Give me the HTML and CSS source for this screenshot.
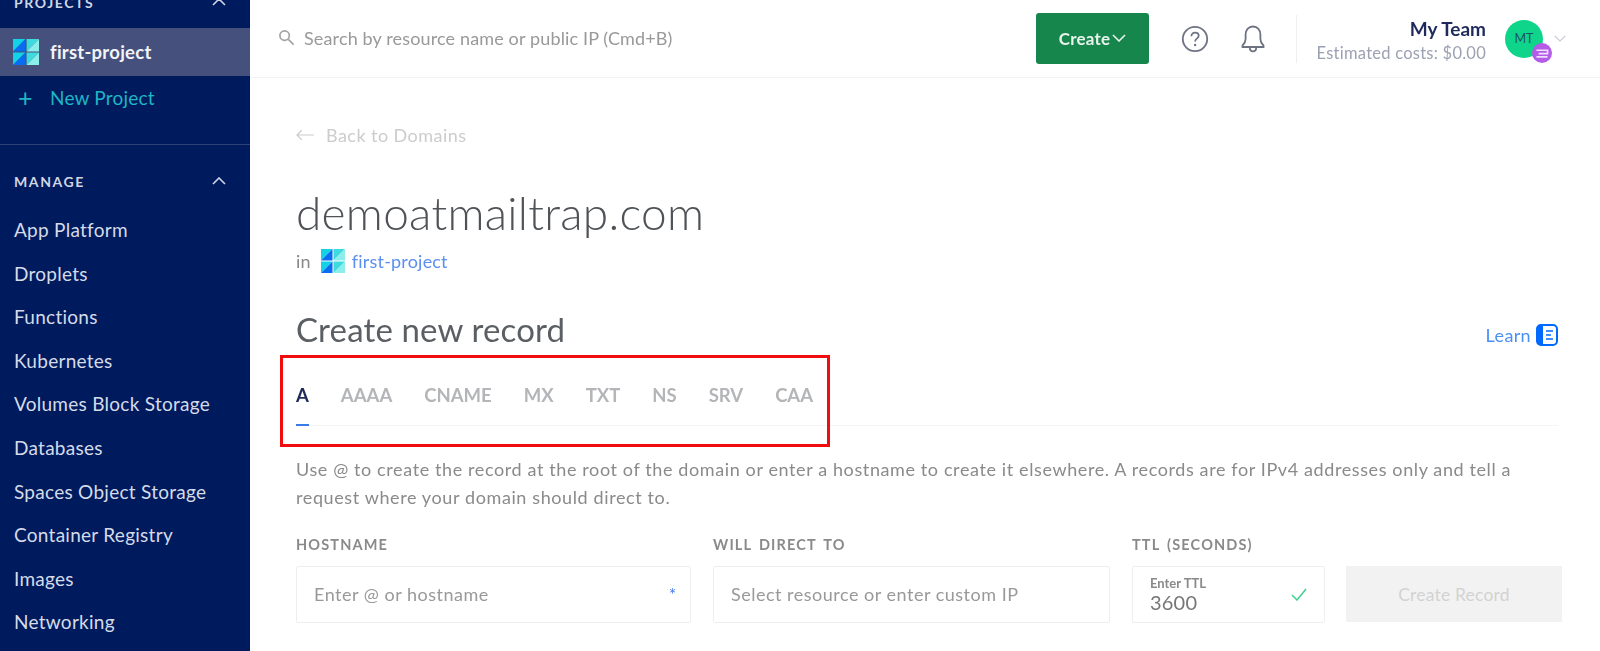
FILE: index.html
```html
<!DOCTYPE html>
<html lang="en">
<head>
<meta charset="utf-8">
<title>demoatmailtrap.com</title>
<link rel="stylesheet" href="styles.css">
</head>
<body>
<div class="app">
  <aside class="sidebar">
    <div class="side-head side-head-projects">
      <span>PROJECTS</span>
      <svg class="caret" viewBox="0 0 14 8"><path d="M1 7l6-6 6 6"/></svg>
    </div>
    <a class="project-row">
      <svg class="logo" viewBox="0 0 24 24"><path d="M0 0h11.500L0 11.500z" fill="#12d3e6"/><path d="M11.500 0v11.500H0z" fill="#0a6cf0"/><path d="M0 12.500h11.500L0 24z" fill="#12d3e6"/><path d="M11.500 12.500V24H0z" fill="#0a6cf0"/><path d="M12.500 0H24L12.500 11.500z" fill="#3ddbe0"/><path d="M24 0v11.500H12.500z" fill="#8ceeea"/><path d="M12.500 12.500H24L12.500 24z" fill="#3ddbe0"/><path d="M24 12.500V24H12.500z" fill="#8ceeea"/></svg>
      <span>first-project</span>
    </a>
    <a class="new-project"><span class="plus">+</span><span>New Project</span></a>
    <div class="side-rule"></div>
    <div class="side-head side-head-manage">
      <span>MANAGE</span>
      <svg class="caret" viewBox="0 0 14 8"><path d="M1 7l6-6 6 6"/></svg>
    </div>
    <nav class="side-nav">
      <a>App Platform</a>
      <a>Droplets</a>
      <a>Functions</a>
      <a>Kubernetes</a>
      <a>Volumes Block Storage</a>
      <a>Databases</a>
      <a>Spaces Object Storage</a>
      <a>Container Registry</a>
      <a>Images</a>
      <a>Networking</a>
    </nav>
  </aside>
  <div class="main">
    <header class="topbar">
      <div class="search">
        <svg class="search-icon" viewBox="0 0 18 18"><circle cx="7" cy="7" r="5"/><path d="M11 11l5.500 5.500"/></svg>
        <span>Search by resource name or public IP (Cmd+B)</span>
      </div>
      <button class="create-btn">Create<svg viewBox="0 0 14 8"><path d="M1 1l6 6 6-6"/></svg></button>
      <svg class="icon-help" viewBox="0 0 28 28"><circle cx="14" cy="14" r="12.200"/><path d="M10.400 11.200c0-2.200 1.600-3.600 3.700-3.600s3.600 1.300 3.600 3.200c0 2.800-3.600 2.900-3.600 5.600"/><circle class="dot" cx="14.100" cy="20" r="1.200"/></svg>
      <svg class="icon-bell" viewBox="0 0 28 30"><path d="M14 2.500c-4.600 0-7.400 3.400-7.400 8v4.500c0 3-1.100 4.500-3.100 6.500v1.500h21v-1.500c-2-2-3.100-3.500-3.100-6.500v-4.500c0-4.600-2.800-8-7.400-8z"/><path d="M10.800 23.500c0 2.500 1.400 3.800 3.200 3.800s3.200-1.300 3.200-3.800"/></svg>
      <div class="top-rule"></div>
      <div class="team">
        <strong>My Team</strong>
        <span>Estimated costs: $0.00</span>
      </div>
      <div class="avatar">MT
        <svg class="avatar-badge" viewBox="0 0 18 18"><circle cx="9" cy="9" r="9" fill="#b45be8"/><path d="M4 6.500h10v3H6M4 12.500h10" fill="none" stroke="#efe0ff" stroke-width="1.500"/></svg>
      </div>
      <svg class="avatar-caret" viewBox="0 0 14 8"><path d="M1 1l6 6 6-6"/></svg>
    </header>
    <main class="content">
      <a class="back"><svg viewBox="0 0 20 12"><path d="M6 1L1 6l5 5M1 6h18"/></svg>Back to Domains</a>
      <h1>demoatmailtrap.com</h1>
      <div class="in-project">
        <span>in</span>
        <svg class="logo" viewBox="0 0 24 24"><path d="M0 0h11.500L0 11.500z" fill="#12d3e6"/><path d="M11.500 0v11.500H0z" fill="#0a6cf0"/><path d="M0 12.500h11.500L0 24z" fill="#12d3e6"/><path d="M11.500 12.500V24H0z" fill="#0a6cf0"/><path d="M12.500 0H24L12.500 11.500z" fill="#3ddbe0"/><path d="M24 0v11.500H12.500z" fill="#8ceeea"/><path d="M12.500 12.500H24L12.500 24z" fill="#3ddbe0"/><path d="M24 12.500V24H12.500z" fill="#8ceeea"/></svg>
        <a>first-project</a>
      </div>
      <div class="record-head">
        <h2>Create new record</h2>
        <a class="learn">Learn<svg viewBox="0 0 22 22"><rect x="1" y="1" width="20" height="20" rx="4" fill="#fff" stroke="#0069ff" stroke-width="2"/><path d="M1 5a4 4 0 0 1 4-4h2v20H5a4 4 0 0 1-4-4z" fill="#0069ff"/><path d="M10 7h7M10 11h5M10 15h7" stroke="#0069ff" stroke-width="1.600"/></svg></a>
      </div>
      <div class="tabs">
        <a class="tab active">A</a>
        <a class="tab">AAAA</a>
        <a class="tab">CNAME</a>
        <a class="tab">MX</a>
        <a class="tab">TXT</a>
        <a class="tab">NS</a>
        <a class="tab">SRV</a>
        <a class="tab">CAA</a>
        <div class="highlight"></div>
      </div>
      <p class="desc">Use @ to create the record at the root of the domain or enter a hostname to create it elsewhere. A records are for IPv4 addresses only and tell a request where your domain should direct to.</p>
      <div class="form">
        <div class="field field-host">
          <label>HOSTNAME</label>
          <div class="input"><span>Enter @ or hostname</span><i class="req">*</i></div>
        </div>
        <div class="field field-dir">
          <label>WILL DIRECT TO</label>
          <div class="input"><span>Select resource or enter custom IP</span></div>
        </div>
        <div class="field field-ttl">
          <label>TTL (SECONDS)</label>
          <div class="input input-ttl">
            <div class="ttl-text"><small>Enter TTL</small><b>3600</b></div>
            <svg viewBox="0 0 16 13"><path d="M1 7l5 5 9-11"/></svg>
          </div>
        </div>
        <button class="submit">Create Record</button>
      </div>
    </main>
  </div>
</div>
</body>
</html>
```
FILE: styles.css
```css
* { box-sizing: border-box; }
html, body { margin: 0; height: 100%; overflow: hidden; background: #fff; }
body { font-family: Lato, "Open Sans", sans-serif; color: #555; }
a { text-decoration: none; }
h1, h2, p { margin: 0; font-weight: 400; }

.app { display: flex; height: 651px; overflow: hidden; filter: blur(0.35px); }

.sidebar { width: 250px; flex: none; background: #001a5e; color: #d8deea; overflow: hidden; }
.side-head { display: flex; align-items: center; justify-content: space-between; padding: 0 24px 0 14px; font-size: 14px; font-weight: 700; letter-spacing: 1.600px; color: #cfd6e4; height: 20px; }
.side-head-projects { margin-top: -8px; }
.side-head-manage { margin-top: 26px; }
.caret { width: 14px; height: 8px; fill: none; stroke: #cfd6e4; stroke-width: 1.600; }
.project-row { display: flex; align-items: center; gap: 11px; height: 48px; margin-top: 16px; padding-left: 13px; background: #45507c; color: #f2f4f8; font-size: 18.500px; font-weight: 700; letter-spacing: 0.250px; }
.logo { width: 24px; height: 24px; flex: none; }
.project-row .logo { width: 26px; height: 26px; }
.new-project { display: flex; align-items: center; gap: 21px; height: 42px; padding-left: 18px; color: #1fb5c4; font-size: 19px; letter-spacing: 0.200px; }
.plus { font-size: 25px; line-height: 1; width: 11px; }
.side-rule { height: 1px; background: #2f4278; margin-top: 26px; }
.side-nav { display: flex; flex-direction: column; margin-top: 17px; padding-left: 14px; }
.side-nav a { height: 43.600px; line-height: 43.600px; font-size: 19px; letter-spacing: 0.270px; color: #d5dbe8; white-space: nowrap; }

.main { flex: 1; min-width: 0; display: flex; flex-direction: column; }
.topbar { height: 78px; flex: none; display: flex; align-items: center; padding: 0 34px 0 28px; border-bottom: 1px solid #f3f3f3; }
.search { flex: 1; display: flex; align-items: center; gap: 9px; color: #999; font-size: 18px; letter-spacing: 0.140px; padding-bottom: 2px; }
.search-icon { width: 17px; height: 17px; fill: none; stroke: #a3a3a3; stroke-width: 1.800; }
.create-btn { width: 113px; height: 51px; display: flex; align-items: center; justify-content: center; gap: 2px; padding-bottom: 2px; border: 0; border-radius: 3px; background: #16864d; color: #e8f3ec; font: 700 17px Lato, sans-serif; letter-spacing: 0.200px; }
.create-btn svg { width: 14px; height: 8px; fill: none; stroke: #e8f3ec; stroke-width: 1.600; }
.icon-help { width: 28px; height: 28px; margin-left: 32px; fill: none; stroke: #6e7383; stroke-width: 1.800; }
.icon-help .dot { fill: #6e7383; stroke: none; }
.icon-bell { width: 28px; height: 30px; margin-left: 30px; fill: none; stroke: #6e7383; stroke-width: 1.800; }
.top-rule { width: 1px; height: 48px; margin-left: 29px; background: #efefef; }
.team { width: 189px; display: flex; flex-direction: column; align-items: flex-end; line-height: 24px; padding-top: 5px; }
.team strong { font-size: 19px; font-weight: 700; color: #1f2a5c; }
.team span { font-size: 16.500px; letter-spacing: 0.250px; color: #9ca1b3; }
.avatar { position: relative; width: 38px; height: 38px; margin-left: 19px; border-radius: 50%; background: #0fd58b; color: #16566a; font-size: 12.500px; line-height: 38px; text-align: center; }
.avatar-badge { position: absolute; right: -9px; bottom: -5px; width: 20px; height: 20px; }
.avatar-caret { width: 12px; height: 7px; margin-left: 11px; fill: none; stroke: #c2c5cf; stroke-width: 1.300; }

.content { flex: 1; padding: 48px 42px 0 46px; }
.back { display: flex; align-items: center; gap: 11px; height: 20px; margin-top: -1px; color: #ccc; font-size: 18px; letter-spacing: 0.450px; }
.back svg { width: 19px; height: 12px; fill: none; stroke: #ccc; stroke-width: 1.300; }
h1 { margin-top: 40px; font-size: 46px; font-weight: 300; line-height: 56px; color: #4f5357; letter-spacing: 0.270px; }
.in-project { display: flex; align-items: center; gap: 10px; margin-top: 7px; height: 26px; font-size: 18px; letter-spacing: 0.200px; color: #888; }
.in-project a { color: #5b8ff0; margin-left: -3px; }
.record-head { display: flex; align-items: center; justify-content: space-between; margin-top: 35px; height: 40px; }
h2 { font-size: 33px; line-height: 40px; color: #5b5f63; letter-spacing: 0.150px; }
.learn { display: flex; align-items: center; gap: 5px; color: #4a90f5; font-size: 18px; letter-spacing: 0.350px; margin-top: 11px; }
.learn svg { width: 22px; height: 22px; }

.tabs { position: relative; display: flex; gap: 32px; height: 62px; margin-top: 15px; padding-top: 16px; border-bottom: 1px solid #f5f5f5; }
.tab { position: relative; font-size: 18.500px; font-weight: 700; line-height: 30px; height: 46px; color: #b3b5b8; }
.tab.active { color: #1f2a5c; border-bottom: 2px solid #3b7be8; }
.highlight { position: absolute; left: -16px; top: -9px; width: 550px; height: 92px; border: 3px solid #f10d0d; }

.desc { margin-top: 29px; max-width: 1240px; font-size: 18px; letter-spacing: 0.610px; line-height: 28px; color: #8a8a8a; }
.form { display: flex; margin-top: 23px; }
.field { display: flex; flex-direction: column; flex: none; }
.field-host { width: 395px; margin-right: 22px; }
.field-dir { width: 397px; margin-right: 22px; }
.field-ttl { width: 193px; margin-right: 21px; }
.field label { font-size: 14.500px; font-weight: 700; letter-spacing: 1.150px; word-spacing: 2.500px; color: #8a8a8a; line-height: 22px; height: 22px; }
.input { display: flex; align-items: center; justify-content: space-between; height: 57px; margin-top: 10px; padding: 0 17px 2px; border: 1px solid #eeeeee; border-radius: 2px; font-size: 18px; letter-spacing: 0.500px; color: #999; }
.req { color: #4a7df0; font-style: normal; font-size: 18px; margin-right: -4px; }
.input-ttl { padding-bottom: 0; }
.input-ttl svg { width: 16px; height: 13px; fill: none; stroke: #3fd18f; stroke-width: 1.500; }
.ttl-text { display: flex; flex-direction: column; }
.ttl-text small { font-size: 13px; font-weight: 700; line-height: 14px; letter-spacing: 0; color: #8a8a8a; }
.ttl-text b { font-size: 20px; font-weight: 400; line-height: 24px; letter-spacing: 0.200px; color: #777; }
.submit { flex: none; width: 216px; height: 56px; margin-top: 32px; border: 0; background: #f2f2f2; color: #d2d2d2; font: 400 17.500px Lato, sans-serif; letter-spacing: 0.200px; }
```
